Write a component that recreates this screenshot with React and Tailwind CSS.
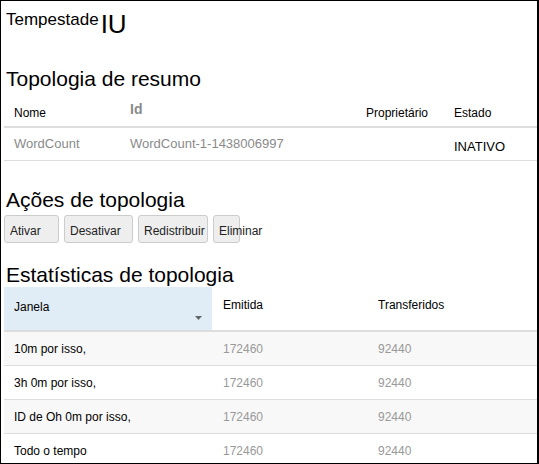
const summaryCols = 'grid grid-cols-[126px_236px_88px_1fr]'
const statsCols = 'grid grid-cols-[208px_155px_1fr]'

const actions = [
  { label: 'Ativar', w: 'w-[55px]' },
  { label: 'Desativar', w: 'w-[69px]' },
  { label: 'Redistribuir', w: 'w-[70px]' },
  { label: 'Eliminar', w: 'w-[27px]' },
]

const stats = [
  { window: '10m por isso,', emitted: '172460', transferred: '92440' },
  { window: '3h 0m por isso,', emitted: '172460', transferred: '92440' },
  { window: 'ID de Oh 0m por isso,', emitted: '172460', transferred: '92440' },
  { window: 'Todo o tempo', emitted: '172460', transferred: '92440' },
]

const App = () => {
  return (
    <div className="w-[539px] h-[464px] overflow-hidden bg-white border-l border-t border-b border-r-2 border-black pl-[3px] text-black font-['Liberation_Sans',Arial,sans-serif]">
      {/* Title */}
      <div className="flex items-start gap-[2px] pt-[10px] ml-[2px]">
        <span className="text-[17px] leading-none">Tempestade</span>
        <span className="text-[26px] leading-none">IU</span>
      </div>

      {/* Topology summary */}
      <h2 className="mt-[31px] ml-[2px] text-[21px] leading-none">Topologia de resumo</h2>
      <div className={`${summaryCols} h-[39px] border-b-2 border-[#dddddd] text-[12px] leading-none`}>
        <div className="pl-[10px] pt-[18px]">Nome</div>
        <div className="pt-[13px] text-[14px] font-bold text-[#8a8a8a]">Id</div>
        <div className="pt-[18px]">Proprietário</div>
        <div className="pt-[18px]">Estado</div>
      </div>
      <div className={`${summaryCols} h-[33px] border-b border-[#dddddd] text-[13px] leading-none`}>
        <div className="pl-[10px] pt-[9px] text-[#8a8a8a]">WordCount</div>
        <div className="pt-[9px] text-[#8a8a8a]">WordCount-1-1438006997</div>
        <div></div>
        <div className="pt-[12px]">INATIVO</div>
      </div>

      {/* Topology actions */}
      <h2 className="mt-[28px] ml-[2px] text-[21px] leading-none">Ações de topologia</h2>
      <div className="flex gap-[5px] mt-[5px]">
        {actions.map((a) => (
          <button
            key={a.label}
            className={`${a.w} h-[28px] shrink-0 rounded-[3px] border border-[#cccccc] bg-[#eeeeee] pl-[5px] pt-[9px] text-left text-[12px] leading-none text-[#222222] whitespace-nowrap overflow-visible flex items-start`}
          >
            {a.label}
          </button>
        ))}
      </div>

      {/* Topology stats */}
      <h2 className="mt-[21px] ml-[2px] text-[21px] leading-none">Estatísticas de topologia</h2>
      <div className={`${statsCols} mt-[2px] h-[45px] border-b-2 border-[#dddddd] text-[12px] leading-none`}>
        <div className="flex flex-col justify-between bg-[#e1edf6] pl-[10px] pr-[10px] pt-[14px] pb-[10px]">
          <span>Janela</span>
          <svg className="self-end" width="7" height="4" viewBox="0 0 7 4">
            <path d="M0 0h7L3.5 4z" fill="#666666" />
          </svg>
        </div>
        <div className="pl-[11px] pt-[12px]">Emitida</div>
        <div className="pl-[11px] pt-[12px]">Transferidos</div>
      </div>
      {stats.map((row, i) => (
        <div
          key={row.window}
          className={`${statsCols} h-[34px] border-b border-[#dddddd] text-[12px] leading-none ${i % 2 === 0 ? 'bg-[#f8f8f8]' : 'bg-white'}`}
        >
          <div className="flex items-center pl-[10px]">{row.window}</div>
          <div className="flex items-center pl-[11px] text-[#999999]">{row.emitted}</div>
          <div className="flex items-center pl-[11px] text-[#999999]">{row.transferred}</div>
        </div>
      ))}
    </div>
  )
}

export default App
